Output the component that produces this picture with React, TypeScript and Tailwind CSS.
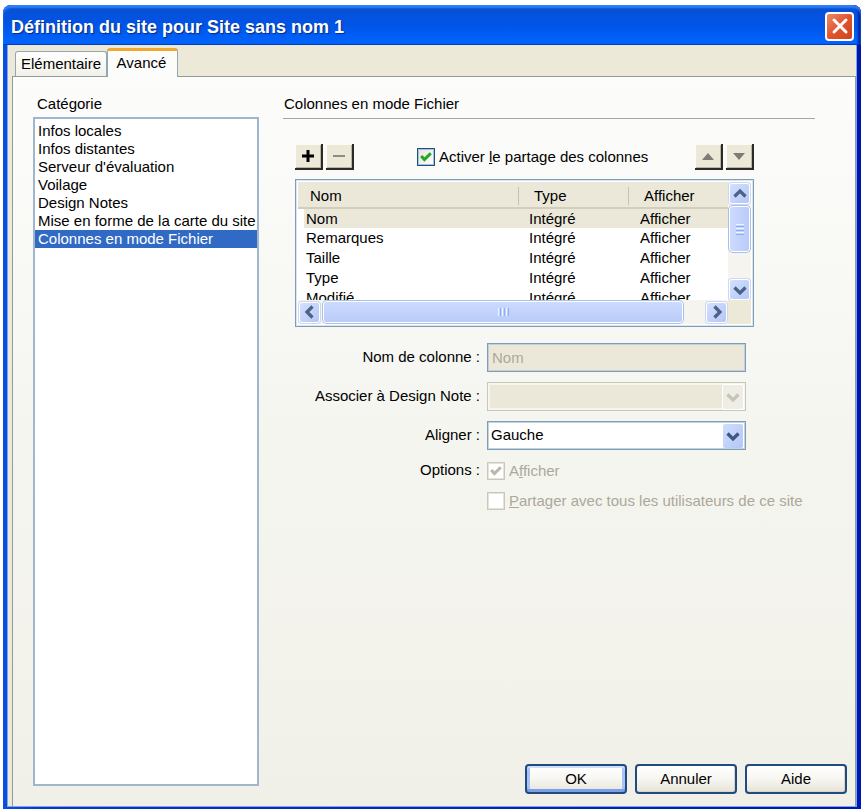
import React, { useState } from "react";

const CATEGORIES = [
  "Infos locales",
  "Infos distantes",
  "Serveur d'évaluation",
  "Voilage",
  "Design Notes",
  "Mise en forme de la carte du site",
  "Colonnes en mode Fichier",
];

const COLUMNS = ["Nom", "Remarques", "Taille", "Type", "Modifié"];

type Direction = "up" | "down" | "left" | "right";

const CHEVRONS: Record<Direction, string> = {
  up: "M1.5 9.5 7 4 12.5 9.5",
  down: "M1.5 4.5 7 10 12.5 4.5",
  left: "M9.5 1.5 4 7 9.5 12.5",
  right: "M4.5 1.5 10 7 4.5 12.5",
};

function Chevron({ direction, className }: { direction: Direction; className: string }) {
  return (
    <svg viewBox="0 0 14 14" className={`size-[14px] ${className}`} fill="none" stroke="currentColor" strokeWidth="3.2" aria-hidden="true">
      <path d={CHEVRONS[direction]} />
    </svg>
  );
}

function ScrollButton({ direction, label }: { direction: Direction; label: string }) {
  return (
    <button
      type="button"
      aria-label={label}
      className="grid size-[21px] shrink-0 place-items-center rounded-[3px] border border-white bg-linear-to-br from-[#d3dffe] to-[#b4c8f6] shadow-[0_0_0_1px_#cbd7f3]"
    >
      <Chevron direction={direction} className="text-[#4d6185]" />
    </button>
  );
}

function ToolButton({ label, children }: { label: string; children: React.ReactNode }) {
  return (
    <button
      type="button"
      aria-label={label}
      className="grid h-[26px] w-[28px] place-items-center border-r-2 border-b-2 border-[#2b2a24] bg-[#ece9d8] shadow-[inset_1px_1px_0_#fbfaf5,inset_-1px_-1px_0_#b9b5a2]"
    >
      {children}
    </button>
  );
}

function CheckBox({ id, checked, disabled, onChange }: { id: string; checked: boolean; disabled?: boolean; onChange?: () => void }) {
  return (
    <span className="grid shrink-0 place-items-center">
      <input
        id={id}
        type="checkbox"
        checked={checked}
        disabled={disabled}
        onChange={onChange}
        className="col-start-1 row-start-1 size-[18px] appearance-none border border-[#1c5180] bg-linear-to-br from-[#e4e4de] to-white shadow-[inset_0_0_0_1px_#a9bfd4] disabled:border-[#cac8bb] disabled:bg-white disabled:bg-none disabled:shadow-[inset_0_0_0_1px_#e6e4da]"
      />
      {checked && (
        <svg
          viewBox="0 0 12 12"
          className={`pointer-events-none col-start-1 row-start-1 size-[12px] ${disabled ? "text-[#b9b6aa]" : "text-[#25a525]"}`}
          fill="none"
          stroke="currentColor"
          strokeWidth="3"
          aria-hidden="true"
        >
          <path d="M1.2 5 4.4 8.6 10.8 2.2" />
        </svg>
      )}
    </span>
  );
}

function DropDown({ id, disabled, options }: { id: string; disabled?: boolean; options: string[] }) {
  return (
    <div className="grid items-center">
      <select
        id={id}
        disabled={disabled}
        className="col-start-1 row-start-1 h-[29px] w-full appearance-none border border-[#7f9db9] bg-white px-[3px] pb-[2px] text-black opacity-100 shadow-[inset_0_0_0_1px_#c4d3e0] disabled:border-[#c9c7ba] disabled:bg-[#ebe8da] disabled:shadow-[inset_0_0_0_2px_#f7f6ee]"
      >
        {options.map((option) => (
          <option key={option}>{option}</option>
        ))}
      </select>
      <span
        className={`pointer-events-none col-start-1 row-start-1 mr-[3px] grid h-6 w-5 place-items-center justify-self-end rounded-xs ${
          disabled ? "bg-[#eeede6] shadow-[0_0_0_1px_#ffffff]" : "bg-linear-to-br from-[#cfdcfd] to-[#b3c7f5]"
        }`}
      >
        <Chevron direction="down" className={disabled ? "text-[#c9c5b6]" : "text-[#3f5680]"} />
      </span>
    </div>
  );
}

function DialogButton({ isDefault, children }: { isDefault?: boolean; children: React.ReactNode }) {
  return (
    <button
      type="button"
      className={`h-[30px] w-[102px] rounded-[4px] border-2 border-[#1f4a82] bg-linear-to-b from-white via-[#f7f6f1] to-[#e6e3d8] ${
        isDefault ? "shadow-[inset_0_2px_0_#cfdffb,inset_0_-3px_0_#7d9fe6,inset_3px_0_0_#a9c3f5,inset_-3px_0_0_#a9c3f5]" : "shadow-[inset_-1px_-1px_0_#d8d4c6]"
      }`}
    >
      {children}
    </button>
  );
}

export default function App() {
  const [category, setCategory] = useState("Colonnes en mode Fichier");
  const [sharing, setSharing] = useState(true);

  return (
    <div className="flex min-h-screen flex-col bg-white pt-[5px] pr-px pl-[3px] font-['Liberation_Sans',Arial,sans-serif] text-[15px] leading-[18px] text-black">
      <div className="flex flex-1 flex-col rounded-t-[8px] bg-linear-to-r from-[#0a4fe0] via-[#0a35c4] via-5% to-[#0016b0]">
        <header className="flex h-10 items-center justify-between rounded-t-[8px] bg-linear-to-b from-[#0a4fd0] via-[#0054e8] to-[#0066ff] pr-[7px] pl-2 shadow-[inset_0_3px_2px_#2f80f8,inset_-3px_0_2px_#0228a5,inset_0_-1px_0_#0445c8]">
          <h1 className="pt-1 text-[18px] leading-[22px] font-bold text-white [text-shadow:1px_1px_1px_#0b2a80]">Définition du site pour Site sans nom 1</h1>
          <button
            type="button"
            aria-label="Fermer"
            className="mt-[2px] grid size-[29px] place-items-center rounded-[4px] border-2 border-white bg-linear-to-br from-[#ec8a6e] via-[#e0532b] to-[#d0441a]"
          >
            <svg viewBox="0 0 20 20" className="size-5" stroke="white" strokeWidth="3" strokeLinecap="round" aria-hidden="true">
              <path d="M4 4 16 16M16 4 4 16" />
            </svg>
          </button>
        </header>

        <div className="mr-1 mb-[2px] ml-1 flex flex-1 flex-col border-x border-b border-[#7ea4ea] bg-[#ece9d8] pl-1">
          <div role="tablist" className="z-10 -mb-px flex items-end px-[3px] pt-[3px]">
            <button type="button" role="tab" aria-selected="false" className="mb-px h-[25px] w-[92px] rounded-t-[3px] border border-b-0 border-[#91a7b4] bg-linear-to-b from-white to-[#f1f0e8]">
              Elémentaire
            </button>
            <button type="button" role="tab" aria-selected="true" className="h-[29px] w-[71px] rounded-t-[3px] border-x border-t-[3px] border-x-[#91a7b4] border-t-[#f0a830] bg-[#fcfcfb] pr-[2px] pb-[3px]">
              Avancé
            </button>
          </div>

          <main className="flex flex-1 gap-6 border-t border-r border-l border-[#919b9c] bg-linear-to-b from-[#fcfcfb] via-[#f5f5f0] to-[#f1f0e8] pr-2 pl-5">
            <div className="flex w-[226px] shrink-0 flex-col pt-[18px] pb-5">
              <label htmlFor="category" className="mb-1 pl-1">
                Catégorie
              </label>
              <select
                id="category"
                size={7}
                value={category}
                onChange={(event) => setCategory(event.target.value)}
                className="w-full flex-1 appearance-none overflow-hidden rounded-none border-2 border-[#9fb6cc] bg-white pt-[3px]"
              >
                {CATEGORIES.map((name) => (
                  <option key={name} value={name} className="h-[18px] min-h-0 px-[3px] py-0 leading-[18px] text-black checked:bg-[#316ac5] checked:text-white">
                    {name}
                  </option>
                ))}
              </select>
            </div>

            <div className="flex min-w-0 flex-1 flex-col pt-[18px] pb-3">
              <section className="pr-8">
                <h2 className="border-b border-[#aaa79a] pb-[5px] pl-px">Colonnes en mode Fichier</h2>

                <div className="ml-3 max-w-[459px] pt-[25px]">
                  <div className="flex items-center gap-[3px]">
                    <ToolButton label="Ajouter">
                      <svg viewBox="0 0 12 12" className="size-3" stroke="black" strokeWidth="3" aria-hidden="true">
                        <path d="M0 6H12M6 0V12" />
                      </svg>
                    </ToolButton>
                    <ToolButton label="Supprimer">
                      <svg viewBox="0 0 12 12" className="size-3" stroke="#8f8c80" strokeWidth="2" aria-hidden="true">
                        <path d="M0 6H12" />
                      </svg>
                    </ToolButton>
                    <div className="ml-[60px] flex items-center gap-1">
                      <CheckBox id="sharing" checked={sharing} onChange={() => setSharing(!sharing)} />
                      <label htmlFor="sharing">
                        Activer <u>l</u>e partage des colonnes
                      </label>
                    </div>
                    <div className="ml-auto flex gap-[3px]">
                      <ToolButton label="Monter">
                        <svg viewBox="0 0 12 7" className="h-[7px] w-3" fill="#7d7d75" aria-hidden="true">
                          <path d="M6 0 12 7H0Z" />
                        </svg>
                      </ToolButton>
                      <ToolButton label="Descendre">
                        <svg viewBox="0 0 12 7" className="h-[7px] w-3" fill="#7d7d75" aria-hidden="true">
                          <path d="M0 0H12L6 7Z" />
                        </svg>
                      </ToolButton>
                    </div>
                  </div>

                  <div className="mt-[9px] border border-[#7f9db9] bg-white p-[2px] shadow-[inset_0_0_0_1px_#dbe5ee]">
                    <div className="flex h-[118px]">
                      <div className="min-w-0 flex-1 overflow-hidden">
                        <table className="w-full table-fixed border-collapse text-left">
                          <thead className="bg-[#ebe8da]">
                            <tr className="h-[26px] border-b-2 border-[#d2cebc]">
                              <th scope="col" className="w-[220px] pt-[2px] pl-3 font-normal">Nom</th>
                              <th scope="col" className="w-[110px] bg-linear-to-b from-[#c5c2b0] to-[#c5c2b0] bg-[length:1px_18px] bg-[position:0px_5px] bg-no-repeat pt-[2px] pl-4 font-normal">
                                Type
                              </th>
                              <th scope="col" className="bg-linear-to-b from-[#c5c2b0] to-[#c5c2b0] bg-[length:1px_18px] bg-[position:0px_5px] bg-no-repeat pt-[2px] pl-4 font-normal">
                                Afficher
                              </th>
                            </tr>
                          </thead>
                          <tbody>
                            {COLUMNS.map((name, index) => (
                              <tr key={name} className={index === 0 ? "h-5 bg-linear-to-r from-white from-[6px] to-[#ebe8da] to-[6px]" : "h-5"}>
                                <td className="pl-2">{name}</td>
                                <td className="pl-[11px]">Intégré</td>
                                <td className="pl-3">Afficher</td>
                              </tr>
                            ))}
                          </tbody>
                        </table>
                      </div>
                      <div className="flex w-[23px] flex-col items-center gap-[3px] bg-[#f5f4ee] pt-px">
                        <ScrollButton direction="up" label="Défiler vers le haut" />
                        <div className="flex h-[44px] w-[19px] flex-col items-center justify-center gap-px rounded-[3px] bg-linear-to-r from-[#ccdafd] to-[#b9cbf8] shadow-[0_0_0_1px_white,0_0_0_2px_#a9bfe6]">
                          <i className="h-px w-2 bg-[#eef4fe]" />
                          <i className="h-px w-2 bg-[#8cb0f8]" />
                          <i className="h-px w-2 bg-[#eef4fe]" />
                          <i className="h-px w-2 bg-[#8cb0f8]" />
                          <i className="h-px w-2 bg-[#eef4fe]" />
                          <i className="h-px w-2 bg-[#8cb0f8]" />
                        </div>
                        <div className="mt-auto">
                          <ScrollButton direction="down" label="Défiler vers le bas" />
                        </div>
                      </div>
                    </div>
                    <div className="flex">
                      <div className="flex h-6 flex-1 items-center justify-between bg-[#f5f4ee] px-px">
                        <ScrollButton direction="left" label="Défiler vers la gauche" />
                        <div className="mr-6 ml-1 flex h-5 flex-1 items-center justify-center gap-px rounded-[3px] bg-linear-to-b from-[#ccdafd] to-[#b9cbf8] shadow-[0_0_0_1px_white,0_0_0_2px_#a9bfe6]">
                          <i className="h-2 w-px bg-[#eef4fe]" />
                          <i className="h-2 w-px bg-[#8cb0f8]" />
                          <i className="h-2 w-px bg-[#eef4fe]" />
                          <i className="h-2 w-px bg-[#8cb0f8]" />
                          <i className="h-2 w-px bg-[#eef4fe]" />
                          <i className="h-2 w-px bg-[#8cb0f8]" />
                        </div>
                        <ScrollButton direction="right" label="Défiler vers la droite" />
                      </div>
                      <div className="w-[23px] bg-[#ece9d8]" />
                    </div>
                  </div>
                </div>

                <form className="ml-3 grid grid-cols-[185px_259px] items-center gap-x-[7px] gap-y-[10px] pt-4">
                  <label htmlFor="column-name" className="pb-[2px] text-right">Nom de colonne :</label>
                  <input
                    id="column-name"
                    type="text"
                    defaultValue="Nom"
                    disabled
                    className="h-[29px] border border-[#7f9db9] bg-[#ebe8da] px-1 text-[#aca899] shadow-[inset_0_0_0_1px_#c4cfd2]"
                  />
                  <label htmlFor="design-note" className="pb-[2px] text-right">Associer à Design Note :</label>
                  <DropDown id="design-note" disabled options={[""]} />
                  <label htmlFor="align" className="pb-[2px] text-right">Aligner :</label>
                  <DropDown id="align" options={["Gauche", "Droite", "Centre"]} />
                  <span className="text-right">Options :</span>
                  <div className="flex items-center gap-1 pt-[2px] text-[#aca899]">
                    <CheckBox id="show" checked disabled />
                    <label htmlFor="show">
                      A<u>f</u>ficher
                    </label>
                  </div>
                  <div className="col-start-2 flex items-center gap-1 pt-[2px] whitespace-nowrap text-[#aca899]">
                    <CheckBox id="share-all" checked={false} disabled />
                    <label htmlFor="share-all">
                      <u>P</u>artager avec tous les utilisateurs de ce site
                    </label>
                  </div>
                </form>
              </section>

              <footer className="mt-auto flex justify-end gap-2">
                <DialogButton isDefault>OK</DialogButton>
                <DialogButton>Annuler</DialogButton>
                <DialogButton>Aide</DialogButton>
              </footer>
            </div>
          </main>
        </div>
      </div>
    </div>
  );
}
